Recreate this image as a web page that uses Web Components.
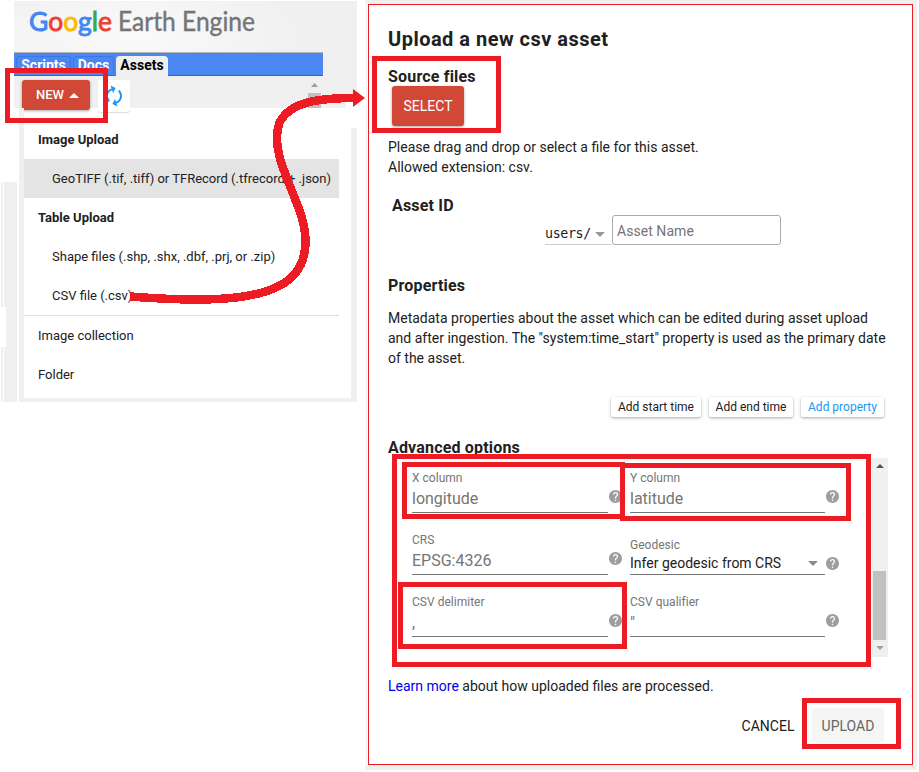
<!DOCTYPE html>
<html lang="en"><head><meta charset="utf-8"><title>Google Earth Engine</title>
<style>
html,body{margin:0;background:#fff}
body{width:919px;height:772px;overflow:hidden;position:relative;display:flex;font:14px/20px Roboto,sans-serif;color:#212121}
</style></head><body>
<ee-assets></ee-assets>
<ee-dialog></ee-dialog>
<ee-marks></ee-marks>
<script>
const define=(name,html)=>customElements.define(name,class extends HTMLElement{
  constructor(){super();const t=document.createElement('template');t.innerHTML=html;
    this.attachShadow({mode:'open'}).append(t.content.cloneNode(true));}
});

define('ee-logo',`<style>
:host{display:block;height:52px;background:linear-gradient(#fff 1px,transparent 1px),radial-gradient(ellipse 180px 60px at 120px 35px,#fafafa,#f0f0f0);}
svg{display:block}</style>
<svg width="343" height="52" font-family="Lato,sans-serif">
<defs><pattern id="d" width="4" height="4" patternUnits="userSpaceOnUse"><rect width="1" height="1" fill="#fff"/><rect x="2" y="2" width="1" height="1" fill="#fff"/></pattern></defs>
<path d="M0 0V52H38L0 10Z" fill="url(#d)"/>
<text x="15" y="31" font-size="27.500" font-weight="400" stroke-width=".9" textLength="83" lengthAdjust="spacingAndGlyphs"><tspan fill="#4285f4" stroke="#4285f4">G</tspan><tspan fill="#ea4335" stroke="#ea4335">o</tspan><tspan fill="#fbbc05" stroke="#fbbc05">o</tspan><tspan fill="#4285f4" stroke="#4285f4">g</tspan><tspan fill="#34a853" stroke="#34a853">l</tspan><tspan fill="#ea4335" stroke="#ea4335">e</tspan></text>
<text x="104" y="31" font-size="26" fill="#757575" stroke="#757575" stroke-width=".4" textLength="137" lengthAdjust="spacingAndGlyphs">Earth Engine</text></svg>`);

define('ee-tab',`<style>
:host{box-sizing:border-box;height:20px;border:1px solid #3b78e7;border-bottom:0;border-radius:4px 4px 0 0;font:700 14px/17px Roboto,sans-serif;color:#fff;text-align:center}
:host([active]){background:#f0f0f0;color:#000;border-color:#f0f0f0}
</style><slot></slot>`);

define('ee-button',`<style>
:host{box-sizing:border-box;display:flex;align-items:center;justify-content:center;border-radius:3px;background:#fff;box-shadow:0 1px 3px rgba(0,0,0,.35);white-space:nowrap}
:host([red]){background:#d14836;color:#fff}
:host([flat]){box-shadow:none;background:none}
</style><slot></slot>`);

define('menu-item',`<style>
:host{display:block;box-sizing:border-box;height:39px;padding-left:14px;font:13px/39px Roboto,sans-serif;width:315px;white-space:nowrap}
:host([sub]){padding-left:28px}:host([head]){font-weight:700}
:host([hover]){background:#e4e4e4}
</style><slot></slot>`);

define('ee-assets',`<style>
:host{display:block;width:365px;flex:none}
.top{margin-left:14px;width:343px;height:108px;background:#f0f0f0}
.bar{box-sizing:border-box;width:309px;height:24px;background:#4a87f0;border-top:1px solid #b4b4b4;border-bottom:1px solid #3366c8;padding:3px 0 0 2px;display:flex;gap:2px}
.tools{display:flex;height:32px;padding:4px 0 0 8px;box-sizing:border-box;gap:8px;background:linear-gradient(#fff,#fff) 332px 19px/11px 13px no-repeat}
.new{width:68px;height:30px;font-weight:500;font-size:13px;padding-left:3px}
.new svg{margin-left:5px}
.ref{width:32px;height:32px;box-shadow:0 1px 1px #ddd}
.sc{margin-left:170px;width:13px;display:block}
.low{display:grid;grid-template-columns:1px 2px 1px 13px 2px 5px 327px 6px;height:294px}
.g{background:#f0f0f0}
.l{margin-top:74px}
.n{height:40px;background:#fff;margin:125px 0 0 -3px;width:5px}
.menu{padding-top:12px;border-bottom:4px solid #f0f0f0;height:278px}
hr{margin:0;border:0;height:1px;background:#ddd;width:315px}
</style>
<div class="top"><ee-logo></ee-logo>
<div class="bar"><ee-tab style="width:55px">Scripts</ee-tab><ee-tab style="width:41px">Docs</ee-tab><ee-tab active style="width:52px">Assets</ee-tab></div>
<div class="tools"><ee-button red class="new">NEW<svg width="10" height="5"><path d="M0 5L5 0L10 5Z" fill="#fff"/></svg></ee-button>
<ee-button class="ref"><svg width="24" height="24" viewBox="0 0 24 24" fill="#2196f3"><g transform="rotate(-18 12 12)"><path d="M12 6v3l4-4-4-4v3c-4.42 0-8 3.58-8 8 0 1.57.46 3.03 1.24 4.26L6.7 14.8A5.87 5.87 0 0 1 6 12c0-3.31 2.69-6 6-6zm6.76 1.74L17.3 9.2c.44.84.7 1.79.7 2.8 0 3.31-2.69 6-6 6v-3l-4 4 4 4v-3c4.42 0 8-3.58 8-8 0-1.57-.46-3.03-1.24-4.26z"/></g></svg></ee-button>
<svg class="sc" width="13" height="28"><path d="M3 7L6.500 3L10 7Z" fill="#9e9e9e"/><path d="M0 13H13V28H0Z" fill="#c1c1c1"/></svg></div></div>
<div class="low"><i></i><i class="g l"></i><i></i><i class="g l"><div class="n"></div></i><i></i><i class="g"></i>
<div class="menu"><menu-item head>Image Upload</menu-item><menu-item sub hover>GeoTIFF (.tif, .tiff) or TFRecord (.tfrecord + .json)</menu-item><menu-item head>Table Upload</menu-item><menu-item sub>Shape files (.shp, .shx, .dbf, .prj, or .zip)</menu-item><menu-item sub>CSV file (.csv)</menu-item><hr><menu-item>Image collection</menu-item><menu-item>Folder</menu-item></div>
<i class="g" style="margin-top:20px"></i></div>`);

define('help-icon',`<style>:host{display:block;width:13px;height:13px}svg{display:block}</style>
<svg width="13" height="13" viewBox="2 2 20 20" fill="#9e9e9e"><path d="M12 2C6.48 2 2 6.48 2 12s4.480 10 10 10 10-4.480 10-10S17.520 2 12 2zm1 17h-2v-2h2v2zm2.070-7.750-.9.920C13.450 12.900 13 13.500 13 15h-2v-.5c0-1.100.45-2.100 1.170-2.830l1.240-1.260c.37-.36.59-.86.59-1.410 0-1.100-.9-2-2-2s-2 .9-2 2H8c0-2.210 1.790-4 4-4s4 1.790 4 4c0 .88-.36 1.680-.93 2.250z"/></svg>`);

define('form-field',`<style>
:host{display:grid;grid-template-columns:var(--w,196px) 13px;column-gap:1px;height:55px;align-content:end}
.f{display:flex;flex-direction:column;justify-content:flex-end;border-bottom:1px solid #757575}
label{font-size:12px;line-height:14px;color:#757575;letter-spacing:.02px}
.v{font-size:16px;line-height:20px;color:#757575;padding:4px 0 3px;display:flex;justify-content:space-between;align-items:center}
:host([select]) .v{font-size:14px;color:#212121;padding:1px 7px 1px 0}
:host([select]) help-icon{margin-bottom:5px}
svg{display:none}:host([select]) svg{display:block}
help-icon{align-self:end;margin-bottom:10px}
</style><div class="f"><label><slot name="label"></slot></label><div class="v"><span><slot></slot></span><svg width="10" height="5"><path d="M0 0H10L5 5Z" fill="#8c8c8c"/></svg></div></div><help-icon></help-icon>`);

define('ee-dialog',`<style>
:host{display:block;box-sizing:border-box;width:552px;height:770px;background:linear-gradient(90deg,#fff 1px,#f0f0f0 1px,#f0f0f0 2px,#fff 2px) 0 4px/3px 761px no-repeat #f0f0f0;padding:4px 3px 5px 3px;flex:none}
.card{box-sizing:border-box;height:761px;width:545px;border:1px solid #ed1c24;background:#fff;padding:22px 27px 0 19px}
h1{margin:0;font-size:20px;line-height:24px;font-weight:700;letter-spacing:.48px}
h2{margin:0;font-size:16px;line-height:20px;font-weight:700;letter-spacing:.18px}
.sel{width:72px;height:40px;margin-left:4px}
.path{display:flex;height:30px;margin-left:157px;align-items:flex-end}
.u{font:13.3px/18px "DejaVu Sans Mono",monospace;width:67px;display:flex;align-items:center;gap:4px;border-bottom:1px solid #ccc;letter-spacing:-.35px;padding-bottom:1px}
.name{box-sizing:border-box;width:169px;height:30px;border:1px solid #aaa;border-radius:3px;padding:5px 4px 3px;color:#757575;letter-spacing:.05px}
.chips{display:flex;justify-content:flex-end;gap:8px;font-size:12px;margin-top:29px;padding-right:1px}
.chips ee-button{height:20px;width:90px;border-radius:2px}
.adv{display:flex;height:199px;width:500px}
.grid{display:grid;grid-template-columns:218px 218px;grid-auto-rows:62px;height:199px;width:460px;padding-left:24px;flex:1;box-sizing:border-box}
.grid form-field:nth-child(even){--w:195px}
.sb{width:16px}
.foot{display:flex;justify-content:flex-end;align-items:center;margin-top:12px;height:35px;padding-right:1px}
.foot ee-button{height:35px;width:72px;color:#212121}
</style><div class="card"><h1>Upload a new csv asset</h1>
<h2 style="margin-top:16px">Source files</h2><ee-button red class="sel" style="margin-top:-1px;padding-bottom:1px">SELECT</ee-button>
<div style="margin-top:11px">Please drag and drop or select a file for this asset.<br>Allowed extension: csv.</div>
<h2 style="margin:19px 0 0 4px">Asset ID</h2>
<div class="path" style="margin-top:-1px"><div class="u"><span>users/</span><svg width="10" height="5"><path d="M0 0H10L5 5Z" fill="#999"/></svg></div><div class="name">Asset Name</div></div>
<h2 style="margin-top:31px">Properties</h2>
<div style="margin-top:12px;white-space:nowrap">Metadata properties about the asset which can be edited during asset upload<br>and after ingestion. The "system:time_start" property is used as the primary date<br>of the asset.</div>
<div class="chips"><ee-button>Add start time</ee-button><ee-button style="width:84px">Add end time</ee-button><ee-button style="width:83px;color:#2196f3">Add property</ee-button></div>
<h2 style="margin-top:21px">Advanced options</h2>
<div class="adv"><div class="grid">
<form-field><span slot="label">X column</span>longitude</form-field><form-field><span slot="label">Y column</span>latitude</form-field>
<form-field><span slot="label">CRS</span>EPSG:4326</form-field><form-field select><span slot="label">Geodesic</span>Infer geodesic from CRS</form-field>
<form-field><span slot="label">CSV delimiter</span>,</form-field><form-field><span slot="label">CSV qualifier</span>"</form-field></div>
<svg class="sb" width="16" height="199"><path d="M0 0H16V199H0Z" fill="#f0f0f0"/><path d="M4 10L8 6L12 10Z" fill="#505050"/><path d="M1 113H14V182H1Z" fill="#c1c1c1"/><path d="M4 188L8 192L12 188Z" fill="#a3a3a3"/></svg></div>
<div style="margin-top:19px"><span style="color:#00e">Learn more</span> about how uploaded files are processed.</div>
<div class="foot"><ee-button flat>CANCEL</ee-button><ee-button flat style="margin-left:8px;background:#f5f5f5;color:#666">UPLOAD</ee-button></div>
</div>`);

define('ee-marks',`<style>:host{position:absolute;inset:0;pointer-events:none}svg{display:block}</style>
<svg width="919" height="772" fill="none" stroke="#ed1c24" stroke-width="5">
<path d="M7.500 70.500H105.500V120.500H7.500ZM374.500 58.500H498.500V130.500H374.500ZM394.500 456.500H868.500V664.500H394.500ZM404.500 464.500H622.500V516.500H404.500ZM622.500 465.500H848.500V518.500H622.500ZM400.500 584.500H624.500V646.500H400.500ZM804.500 700.500H898.500V746.500H804.500Z"/>
<path d="M130 296.500C200 302 252 301 281 285C306 271 311 244 300 212C288 178 271 150 279 124C288 103 315 98 355 98" stroke-width="8.500" shape-rendering="crispEdges"/>
<path d="M353 89L365 98L353 107Z" fill="#ed1c24" stroke="none"/></svg>`);
</script></body></html>
